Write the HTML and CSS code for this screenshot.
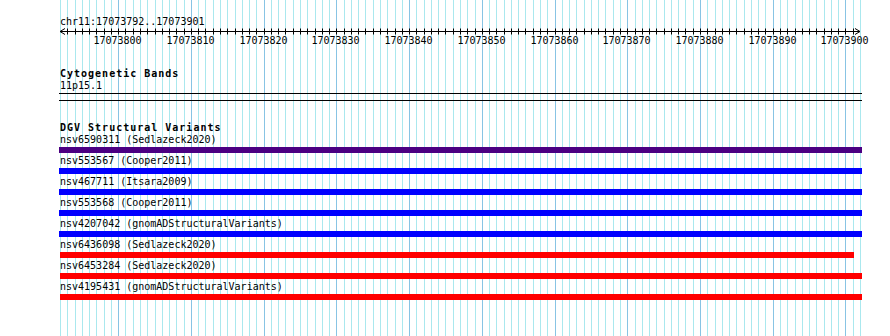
FILE: index.html
```html
<!DOCTYPE html>
<html lang="en">

<head>
    <meta charset="UTF-8">
    <title>chr11:17073792..17073901</title>
    <link rel="stylesheet" href="styles.css">
</head>

<body>

    <div class="browser">
        <!-- one guide line per base, drawn by script.js -->
        <svg class="guides" id="guides" width="803" height="336"></svg>

        <div class="tracks">
            <div class="position">chr11:17073792..17073901</div>
            <svg class="ruler" id="ruler" width="803" height="18"></svg>

            <section class="track cyto">
                <h2>Cytogenetic Bands</h2>
                <div class="band-name">11p15.1</div>
                <div class="band"></div>
            </section>

            <section class="track dgv">
                <h2>DGV Structural Variants</h2>
                <div class="item">
                    <div class="label">nsv6590311 (Sedlazeck2020)</div>
                    <div class="bar complex"></div>
                </div>
                <div class="item">
                    <div class="label">nsv553567 (Cooper2011)</div>
                    <div class="bar gain"></div>
                </div>
                <div class="item">
                    <div class="label">nsv467711 (Itsara2009)</div>
                    <div class="bar gain"></div>
                </div>
                <div class="item">
                    <div class="label">nsv553568 (Cooper2011)</div>
                    <div class="bar gain"></div>
                </div>
                <div class="item">
                    <div class="label">nsv4207042 (gnomADStructuralVariants)</div>
                    <div class="bar gain"></div>
                </div>
                <div class="item">
                    <div class="label">nsv6436098 (Sedlazeck2020)</div>
                    <div class="bar loss" style="width: 794px"></div>
                </div>
                <div class="item">
                    <div class="label">nsv6453284 (Sedlazeck2020)</div>
                    <div class="bar loss"></div>
                </div>
                <div class="item">
                    <div class="label">nsv4195431 (gnomADStructuralVariants)</div>
                    <div class="bar loss"></div>
                </div>
            </section>
        </div>
    </div>

    <script src="script.js"></script>
</body>

</html>
```

FILE: styles.css
```css
html {
    box-sizing: border-box;
}

*,
*:before,
*:after {
    box-sizing: inherit;
}

body {
    margin: 0;
    background: #fff;
    color: #000;
    font-family: "DejaVu Sans Mono", "Liberation Mono", monospace;
    font-size: 10px;
}

.browser {
    position: relative;
    width: 890px;
    height: 336px;
    overflow: hidden;
}

/* guide lines sit under every track */
.guides {
    position: absolute;
    top: 0;
    left: 59px;
}

.guides .base {
    stroke: #aae8ee;
    stroke-width: 1;
}

.guides .decade {
    stroke: #88c4e4;
}

.tracks {
    position: relative;
    width: 862px;
    padding: 16px 0 0 59px;
}

.position {
    line-height: 12px;
    padding-left: 1px;
}

.ruler {
    display: block;
    overflow: visible;
}

.ruler line,
.ruler polyline {
    stroke: #000;
    stroke-width: 1;
    fill: none;
}

.ruler text {
    font-family: "DejaVu Sans Mono", "Liberation Mono", monospace;
    font-size: 10px;
    fill: #000;
}

.track h2 {
    margin: 0;
    font-size: 10px;
    font-weight: bold;
    letter-spacing: 1px;
    line-height: 13px;
    padding-left: 1px;
}

.cyto h2 {
    margin-top: 21px;
}

.band-name {
    line-height: 12px;
    padding-left: 1px;
}

.band {
    width: 803px;
    height: 8px;
    margin-top: 1px;
    border-top: 1px solid #000;
    border-bottom: 1px solid #000;
}

.dgv h2 {
    margin-top: 20px;
}

.item .label {
    line-height: 12px;
    padding-left: 1px;
}

.bar {
    width: 803px;
    height: 6px;
    margin-top: 1px;
    margin-bottom: 2px;
}

.bar.complex {
    background: #4b0082;
}

.bar.gain {
    background: #0000ff;
}

.bar.loss {
    width: 802px;
    margin-left: 1px;
    background: #ff0000;
}
```

FILE: script.js
```js
(function () {
    var start = 17073792;
    var bases = 110;
    var left = 1;            // first base edge inside the svg
    var span = 800;          // pixels for all bases
    var step = span / bases;
    var ns = 'http://www.w3.org/2000/svg';

    function baseX(i) {
        return Math.round(left + i * step) + 0.5;
    }

    function add(parent, tag, attrs) {
        var el = document.createElementNS(ns, tag);
        for (var key in attrs) {
            el.setAttribute(key, attrs[key]);
        }
        parent.appendChild(el);
        return el;
    }

    // guide lines, darker every 10 bases
    var guides = document.getElementById('guides');
    for (var i = 0; i <= bases; i++) {
        var x = baseX(i);
        var cls = (start + i) % 10 === 0 ? 'base decade' : 'base';
        add(guides, 'line', { x1: x, y1: 0, x2: x, y2: 336, 'class': cls });
    }

    // ruler: axis, arrows, ticks and labels
    var ruler = document.getElementById('ruler');
    var axisY = 3.5;
    add(ruler, 'line', { x1: left, y1: axisY, x2: left + span, y2: axisY });
    add(ruler, 'polyline', { points: (left + 5) + ',0.5 ' + left + ',' + axisY + ' ' + (left + 5) + ',6.5' });
    add(ruler, 'polyline', { points: (left + span - 5) + ',0.5 ' + (left + span) + ',' + axisY + ' ' + (left + span - 5) + ',6.5' });

    for (var j = 1; j < bases; j++) {
        var tx = baseX(j);
        add(ruler, 'line', { x1: tx, y1: 0.5, x2: tx, y2: 6.5 });
        if ((start + j) % 10 === 0) {
            var label = add(ruler, 'text', { x: tx - 1, y: 15.5, 'text-anchor': 'middle' });
            label.textContent = start + j;
        }
    }
})();
```
